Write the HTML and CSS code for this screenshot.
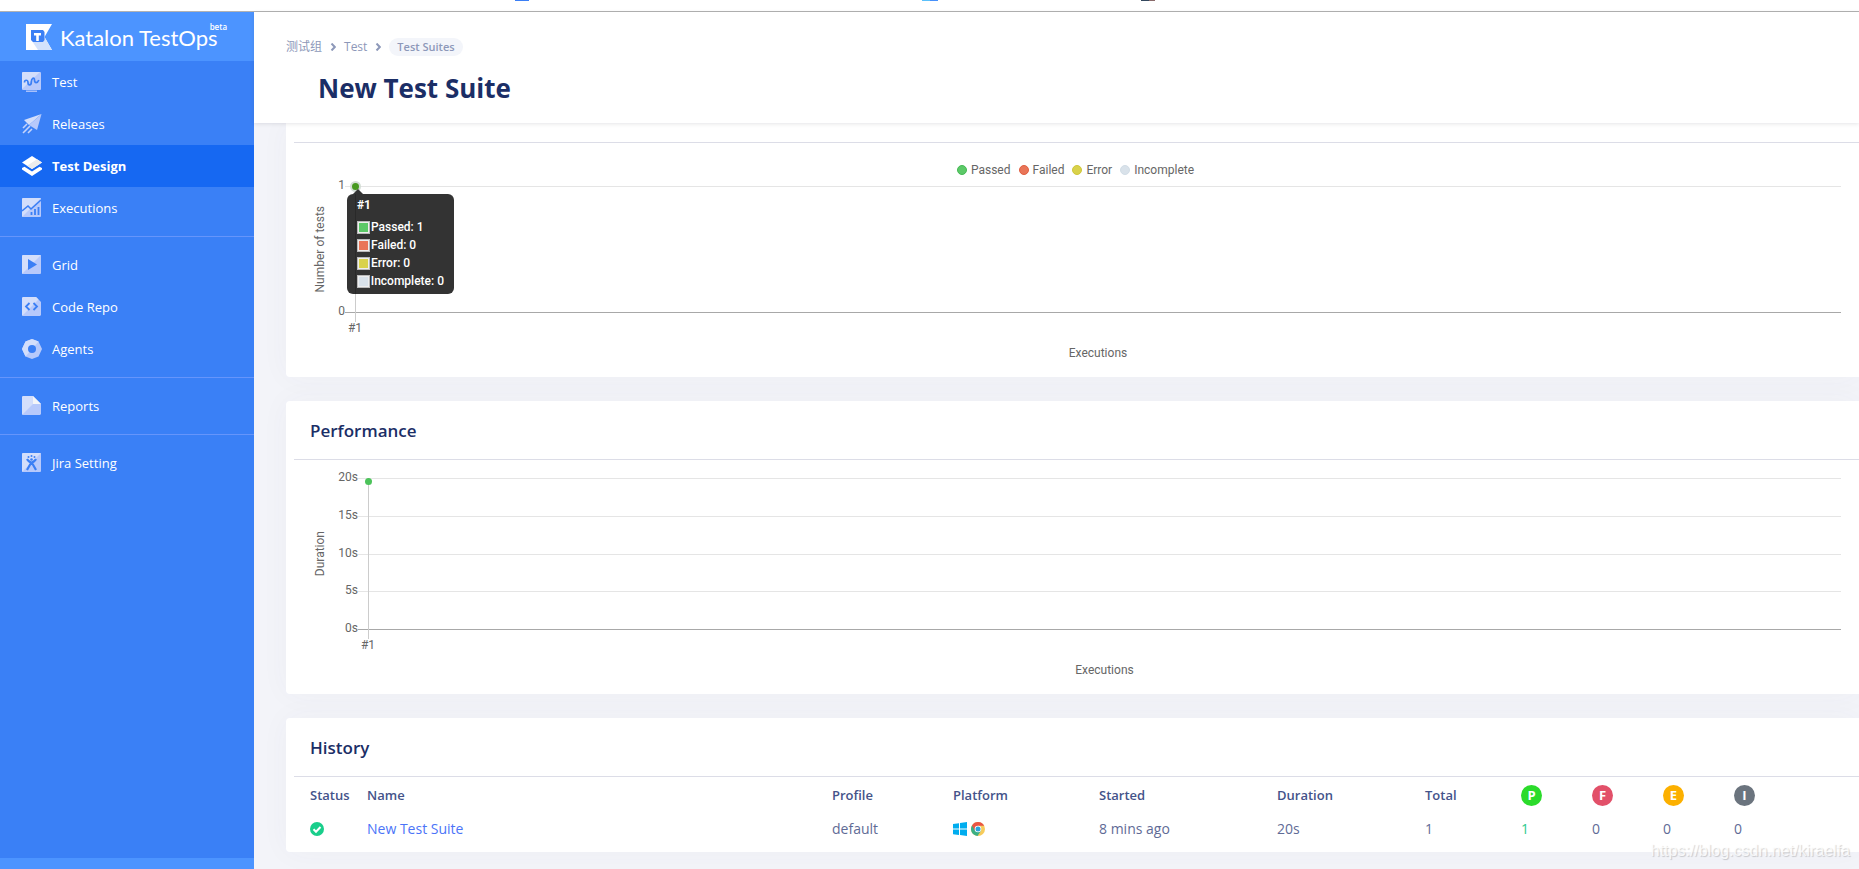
FILE: index.html
```html
<!DOCTYPE html>
<html lang="en">
<head>
<meta charset="utf-8">
<title>New Test Suite - Katalon TestOps</title>
<link rel="stylesheet" href="styles.css">
</head>
<body>
<div class="bookmarks-edge"></div>
<div class="app">
  <aside class="sidebar">
    <a class="brand" href="#">
      <svg class="brand-logo" viewBox="0 0 26 26" aria-hidden="true">
        <path d="M0 0H26L18.500 13 26 26H0Z" fill="#fff"/>
        <path d="M6 17L12 26H26L18.500 13 17 17Z" fill="#d3e2fc"/>
        <path d="M5 6H17L18.500 8V16L17 18H7L5 16Z" fill="#3b7ff5"/>
        <path d="M8 9H15V11.500H12.800V17H10.200V11.500H8Z" fill="#fff"/>
      </svg>
      <span class="brand-name">Katalon TestOps</span><sup class="brand-tag">beta</sup>
    </a>
    <nav class="nav">
      <a class="nav-item" href="#">
        <svg class="icon" viewBox="0 0 20 20" aria-hidden="true"><rect y="0" width="19" height="18" rx="1" fill="#b7c9fb"/><path d="M1 0H18L0 17V1Z" fill="#d3defb"/><path d="M4 18.500H15V20H4Z" fill="#a9c0fa"/><path d="M2.500 10.500C2.500 7.500 6 7.500 6 10.500S9.300 14 9.300 10 12.500 4.500 12.500 8 15.500 11.500 16.800 8" fill="none" stroke="#3b7ff5" stroke-width="1.700"/></svg>
        Test</a>
      <a class="nav-item" href="#">
        <svg class="icon" viewBox="0 0 20 20" aria-hidden="true"><path d="M19.500 0L2 6 7 11Z" fill="#d3defb"/><path d="M19.500 0L7 11 15 16Z" fill="#b7c9fb"/><path d="M1 14L5 10M1 19L8 12M6 19L10 15" stroke="#c5d3fb" stroke-width="1.600"/></svg>
        Releases</a>
      <a class="nav-item is-active" href="#">
        <svg class="icon" viewBox="0 0 20 20" aria-hidden="true"><path d="M10 0L20 6.500 10 13 0 6.500Z" fill="#fff"/><path d="M15 3.300L20 6.500 10 13 5 9.800Z" fill="#ececec"/><path d="M0 12L2.500 10.800 10 15.500 17.500 10.800 20 12V13.500L10 20 0 13.500Z" fill="#fff"/></svg>
        Test Design</a>
      <a class="nav-item" href="#">
        <svg class="icon" viewBox="0 0 20 20" aria-hidden="true"><rect width="19" height="19" rx="1" fill="#b7c9fb"/><path d="M1 0H19L0 19V1Z" fill="#d3defb"/><path d="M0 13L6 8 9 11 19 2" fill="none" stroke="#3b7ff5" stroke-width="1.600"/><path d="M9.500 17V14M13 17V11M16.500 17V9" stroke="#3b7ff5" stroke-width="1.800"/></svg>
        Executions</a>
      <hr class="nav-rule">
      <a class="nav-item" href="#">
        <svg class="icon" viewBox="0 0 20 20" aria-hidden="true"><rect width="19" height="19" rx="1" fill="#b7c9fb"/><path d="M1 0H19L0 19V1Z" fill="#d3defb"/><path d="M6 4L15 9.500 6 15Z" fill="#3b7ff5"/></svg>
        Grid</a>
      <a class="nav-item" href="#">
        <svg class="icon" viewBox="0 0 20 20" aria-hidden="true"><path d="M1 0H14L19 5V18L18 19H1L0 18V1Z" fill="#b7c9fb"/><path d="M1 0H14L16.500 2.500 0 19V1Z" fill="#d3defb"/><path d="M7.500 6L4 9.500 7.500 13M11.500 6L15 9.500 11.500 13" fill="none" stroke="#3b7ff5" stroke-width="1.800"/></svg>
        Code Repo</a>
      <a class="nav-item" href="#">
        <svg class="icon" viewBox="0 0 20 20" aria-hidden="true"><path d="M10 0L16.500 2.500 20 10 16.500 17.500 10 20 3.500 17.500 0 10 3.500 2.500Z" fill="#b7c9fb"/><path d="M10 0L16.500 2.500 3.500 17.500 0 10 3.500 2.500Z" fill="#d3defb"/><circle cx="10" cy="10" r="4" fill="#3b7ff5"/></svg>
        Agents</a>
      <hr class="nav-rule">
      <a class="nav-item" href="#">
        <svg class="icon" viewBox="0 0 20 20" aria-hidden="true"><path d="M1 0H11L19 8V18L18 19H1L0 18V1Z" fill="#b7c9fb"/><path d="M1 0H11V8L0 19V1Z" fill="#d3defb"/><path d="M11 0L19 8H11Z" fill="#f4f5f8"/></svg>
        Reports</a>
      <hr class="nav-rule">
      <a class="nav-item" href="#">
        <svg class="icon" viewBox="0 0 20 20" aria-hidden="true"><rect width="19" height="19" rx="1" fill="#b7c9fb"/><path d="M1 0H19L0 19V1Z" fill="#d3defb"/><path d="M5 6C6 8 8.500 9.500 9.500 9.500S13 8 14 6M9.500 9L5 17M9.500 9L14 17" fill="none" stroke="#3b7ff5" stroke-width="2.200"/><g fill="#3b7ff5"><circle cx="9.500" cy="6.500" r="1.300"/><circle cx="6.500" cy="4" r="1"/><circle cx="9.500" cy="3" r="1"/><circle cx="12.500" cy="4" r="1"/></g></svg>
        Jira Setting</a>
    </nav>
    <div class="sidebar-foot"></div>
  </aside>

  <main class="main">
    <header class="page-head">
      <nav class="crumbs" aria-label="Breadcrumb">
        <a href="#">测试组</a>
        <svg class="chevron" viewBox="0 0 6 8" aria-hidden="true"><path d="M1.500 0.500L4.800 4 1.500 7.500"/></svg>
        <a href="#">Test</a>
        <svg class="chevron" viewBox="0 0 6 8" aria-hidden="true"><path d="M1.500 0.500L4.800 4 1.500 7.500"/></svg>
        <a class="crumb-current" href="#">Test Suites</a>
      </nav>
      <h1>New Test Suite</h1>
    </header>

    <div class="content">
      <section class="card card-first">
        <div class="chart chart-tests">
          <div class="legend">
            <span class="key"><i class="dot passed"></i>Passed</span>
            <span class="key"><i class="dot failed"></i>Failed</span>
            <span class="key"><i class="dot error"></i>Error</span>
            <span class="key"><i class="dot incomplete"></i>Incomplete</span>
          </div>
          <div class="y-title"><span>Number of tests</span></div>
          <div class="y-ticks"><span>1</span><span>0</span></div>
          <div class="plot">
            <i class="line"></i><i class="line base"></i>
            <i class="stem"></i><i class="point point-hover"></i>
            <div class="tooltip">
              <strong>#1</strong>
              <span><i class="swatch passed"></i>Passed: 1</span>
              <span><i class="swatch failed"></i>Failed: 0</span>
              <span><i class="swatch error"></i>Error: 0</span>
              <span><i class="swatch incomplete"></i>Incomplete: 0</span>
            </div>
          </div>
          <div class="x-tick">#1</div>
          <div class="x-title">Executions</div>
        </div>
      </section>

      <section class="card">
        <h2>Performance</h2>
        <div class="chart chart-duration">
          <div class="y-title"><span>Duration</span></div>
          <div class="y-ticks"><span>20s</span><span>15s</span><span>10s</span><span>5s</span><span>0s</span></div>
          <div class="plot">
            <i class="line"></i><i class="line"></i><i class="line"></i><i class="line"></i><i class="line base"></i>
            <i class="stem"></i><i class="point"></i>
          </div>
          <div class="x-tick">#1</div>
          <div class="x-title">Executions</div>
        </div>
      </section>

      <section class="card">
        <h2>History</h2>
        <table class="history">
          <colgroup><col class="c-status"><col><col class="c-profile"><col class="c-platform"><col class="c-started"><col class="c-duration"><col class="c-total"><col class="c-count"><col class="c-count"><col class="c-count"><col class="c-last"></colgroup>
          <thead>
            <tr><th>Status</th><th>Name</th><th>Profile</th><th>Platform</th><th>Started</th><th>Duration</th><th>Total</th><th><span class="badge b-p">P</span></th><th><span class="badge b-f">F</span></th><th><span class="badge b-e">E</span></th><th><span class="badge b-i">I</span></th></tr>
          </thead>
          <tbody>
            <tr>
              <td><svg class="mini" viewBox="0 0 14 14" role="img" aria-label="Passed"><circle cx="7" cy="7" r="7" fill="#19ce8b"/><path d="M3.500 7.200L6 9.700 10.500 5" fill="none" stroke="#fff" stroke-width="2"/></svg></td>
              <td><a href="#">New Test Suite</a></td>
              <td>default</td>
              <td><span class="platforms"><svg class="mini" viewBox="0 0 14 14" role="img" aria-label="Windows"><path d="M0 2L6 1.200V6.600H0ZM7 1L14 0V6.600H7ZM0 7.600H6V13L0 12.200ZM7 7.600H14V14L7 13Z" fill="#00adef"/></svg><svg class="mini" viewBox="0 0 14 14" role="img" aria-label="Chrome"><circle cx="7" cy="7" r="7" fill="#f6cb5c"/><path d="M7 7L1 3.400A7 7 0 0 0 6.500 14L10 8.700Z" fill="#3aaf85"/><path d="M7 7L4 8.700 1 3.400A7 7 0 0 1 13.200 3.800H7Z" fill="#ea5545"/><circle cx="7" cy="7" r="3.300" fill="#fff"/><circle cx="7" cy="7" r="2.500" fill="#2ba3dc"/></svg></span></td>
              <td>8 mins ago</td><td>20s</td><td>1</td><td class="count-passed">1</td><td>0</td><td>0</td><td>0</td>
            </tr>
          </tbody>
        </table>
      </section>
    </div>
    <div class="watermark">https://blog.csdn.net/kiraelfa</div>
  </main>
</div>
</body>
</html>
```

FILE: styles.css
```css
* { box-sizing: border-box; }

body {
  margin: 0;
  min-height: 100vh;
  display: flex;
  flex-direction: column;
  overflow: hidden;
  background: #f3f4f9;
  color: #5f6b96;
  font: 13px/18px "Open Sans", "Noto Sans", "Noto Sans CJK SC", sans-serif;
}

a { color: inherit; text-decoration: none; }

/* Lower edge of the browser's bookmarks bar */
.bookmarks-edge {
  height: 12px;
  border-bottom: 1px solid #b2b2b2;
  background:
    linear-gradient(#3b7ff5, #3b7ff5) 515px 0 / 14px 1px no-repeat,
    linear-gradient(90deg, #5bc0fa 50%, #4790fa 50%) 922px 0 / 16px 1px no-repeat,
    linear-gradient(90deg, #34495e 60%, #8a6a6a 60%) 1141px 0 / 14px 1px no-repeat,
    #fff;
}

.app { flex: 1; display: flex; }

.sidebar {
  flex: 0 0 254px;
  display: flex;
  flex-direction: column;
  background: #3a80f6;
  color: #fff;
}

.brand {
  height: 49px;
  padding-left: 26px;
  display: flex;
  align-items: center;
  background: #4c94ff;
}
.brand-logo { width: 26px; height: 26px; margin-right: 8px; }
.brand-name { padding-top: 2px; font: 22px/24px Lato, sans-serif; }
.brand-tag {
  align-self: flex-start;
  margin: 10px 0 0 -8px;
  font: 8px/10px "Open Sans", sans-serif;
  font-weight: 600;
}

.nav { flex: 1; }
.nav-item {
  height: 42px;
  padding-left: 22px;
  display: flex;
  align-items: center;
  gap: 10px;
}
.nav-item.is-active { background: #1668f2; font-weight: 700; }
.icon { width: 20px; height: 20px; }
.nav-rule { height: 1px; margin: 7px 0; border: 0; background: #6595fb; }
.sidebar-foot { height: 11px; background: #4c94ff; }

.main { position: relative; flex: 1; min-width: 0; }

.page-head {
  position: relative;
  height: 111px;
  padding: 26px 32px 0;
  background: #fff;
  box-shadow: 0 1px 4px rgba(40, 40, 60, .12);
}
.crumbs {
  display: flex;
  align-items: center;
  gap: 8px;
  font-size: 12px;
  color: #8d98b9;
}
.chevron {
  width: 6px;
  height: 8px;
  fill: none;
  stroke: #8d98b9;
  stroke-width: 2;
}
.crumb-current {
  padding: 0 8px;
  border-radius: 9px;
  background: #f3f5fa;
  font-size: 11px;
  font-weight: 600;
}
h1 {
  margin: 14px 0 0 32px;
  color: #1b2e66;
  font-size: 26px;
  line-height: 36px;
  font-weight: 700;
}

.content {
  padding-left: 32px;
  display: flex;
  flex-direction: column;
  gap: 24px;
}
.card {
  border-radius: 4px 0 0 4px;
  background: #fff;
  box-shadow: 0 0 30px rgba(70, 70, 90, .04);
}
.card-first { padding-top: 19px; border-top-left-radius: 0; }
h2 {
  margin: 0;
  padding: 17px 24px 15px;
  color: #1b2e66;
  font-size: 17px;
  line-height: 26px;
  font-weight: 600;
}

/* Charts */
.chart {
  position: relative;
  padding: 19px 18px 15px 24px;
  display: grid;
  color: #666;
  font: 12px/18px Roboto, sans-serif;
}
.chart::before {
  content: "";
  position: absolute;
  inset: 0 0 auto 8px;
  height: 1px;
  background: #dcdde7;
}
.chart-tests { grid-template: 25px 127px auto auto / 20px 15px 1fr; }
.chart-duration { grid-template: 152px auto auto / 20px 28px 1fr; }

.legend {
  grid-column: 1 / -1;
  display: flex;
  justify-content: center;
  align-items: flex-start;
  gap: 8px;
}
.key { display: flex; align-items: center; gap: 4px; }
.dot { width: 10px; height: 10px; border-radius: 50%; border: 1px solid; }
.passed { background: #5cc968; border-color: #45b954; }
.failed { background: #e97558; border-color: #e05f40; }
.error { background: #d9d24b; border-color: #cfc73a; }
.incomplete { background: #d9e2ea; border-color: #d2dde6; }

.y-title {
  display: grid;
  place-items: center;
  white-space: nowrap;
}
.y-title span { writing-mode: vertical-rl; transform: rotate(180deg); }
.y-ticks {
  margin: -1px 0 1px;
  display: flex;
  flex-direction: column;
  justify-content: space-between;
  align-items: flex-end;
}
.y-ticks span { height: 1px; line-height: 1px; }
.plot {
  position: relative;
  display: flex;
  flex-direction: column;
  justify-content: space-between;
}
.line { height: 1px; background: #e5e5e5; }
.line.base { background: #a8a8a8; }
.stem {
  position: absolute;
  left: 10px;
  top: 0;
  bottom: -9px;
  width: 1px;
  background: #ccc;
}
.point {
  position: absolute;
  left: 7px;
  top: 0;
  width: 7px;
  height: 7px;
  border-radius: 50%;
  background: #4cc35a;
}
.point-hover {
  left: 5px;
  top: -5px;
  width: 11px;
  height: 11px;
  border: 2px solid #d3ddd5;
  background: #47991f;
}
.x-tick,
.x-title { grid-column: 3; }
.x-tick { width: 20px; padding-top: 6px; text-align: center; }
.x-title { padding: 7px 0 0 10px; text-align: center; }

.tooltip {
  position: absolute;
  left: 2px;
  top: 8px;
  width: 107px;
  padding: 2px 10px 4px;
  display: flex;
  flex-direction: column;
  border-radius: 6px;
  background: rgba(0, 0, 0, .8);
  color: #fff;
  white-space: nowrap;
}
.tooltip::before {
  content: "";
  position: absolute;
  left: 6px;
  top: -5px;
  border: 5px solid transparent;
  border-top: 0;
  border-bottom-color: #333;
}
.tooltip strong { margin-bottom: 4px; }
.tooltip span { display: flex; align-items: center; gap: 1px; font-weight: 500; }
.swatch { width: 13px; height: 13px; border: 1px solid #b9b9b9; box-shadow: inset 0 0 0 1px #eee; }

/* History table */
.history {
  width: calc(100% - 8px);
  margin-left: 8px;
  border-collapse: collapse;
  border-top: 1px solid #dcdde7;
  table-layout: fixed;
}
.card:last-child { padding-bottom: 8px; }
.history th { height: 37px; padding: 0; text-align: left; font-weight: 600; color: #44538a; }
.history td { height: 30px; padding: 0; font-size: 14px; }
.history th:first-child,
.history td:first-child { padding-left: 16px; }
.history a { color: #4b74f8; }
.c-status { width: 73px; }
.c-profile { width: 121px; }
.c-platform { width: 146px; }
.c-started { width: 178px; }
.c-duration { width: 148px; }
.c-total { width: 96px; }
.c-count { width: 71px; }
.c-last { width: 125px; }
.badge {
  width: 21px;
  height: 21px;
  display: grid;
  place-items: center;
  border-radius: 50%;
  color: #fff;
  font-weight: 700;
}
.b-p { background: #2bdb2b; }
.b-f { background: #e25069; }
.b-e { background: #fcb000; }
.b-i { background: #6b747e; }
.history .count-passed { color: #2dc98d; }
.mini { width: 14px; height: 14px; display: block; }
.platforms { display: flex; gap: 4px; }

.watermark {
  position: absolute;
  right: 9px;
  bottom: 8px;
  color: rgba(255, 255, 255, .8);
  font: 16px/20px "Liberation Sans", sans-serif;
  text-shadow: 1px 1px 1px rgba(0, 0, 0, .18);
}
```
